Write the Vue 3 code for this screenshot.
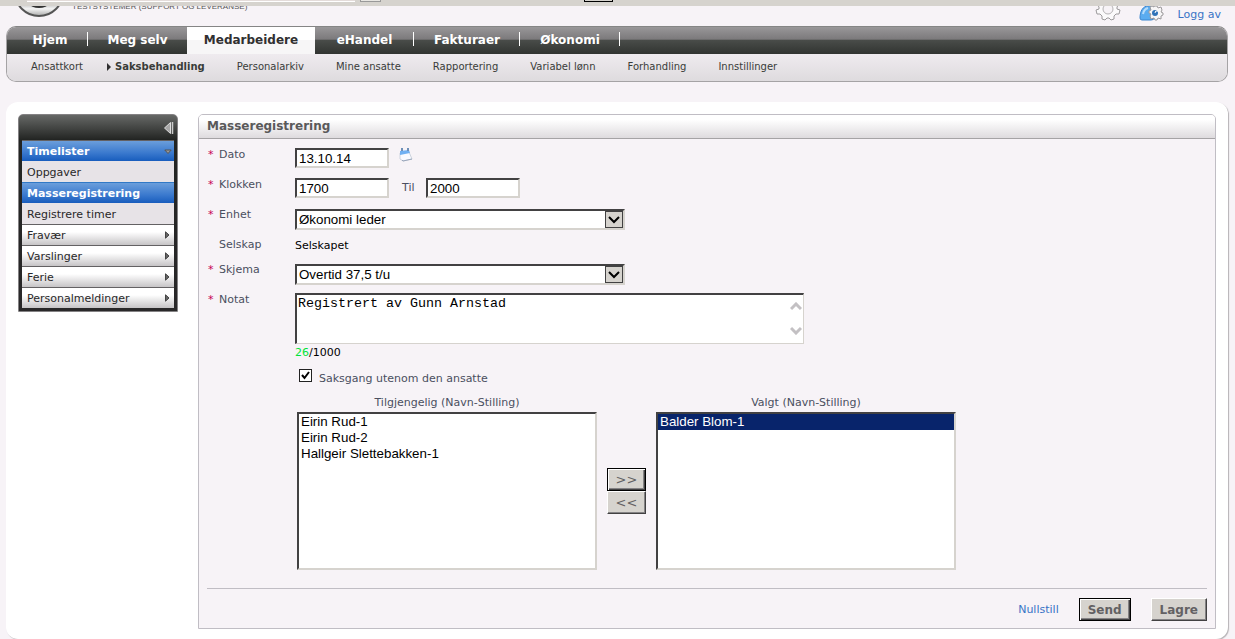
<script setup>
import { ref } from 'vue'

const tabs = ['Hjem', 'Meg selv', 'Medarbeidere', 'eHandel', 'Fakturaer', 'Økonomi']
const subTabs = [
  'Ansattkort', 'Saksbehandling', 'Personalarkiv', 'Mine ansatte',
  'Rapportering', 'Variabel lønn', 'Forhandling', 'Innstillinger',
]
const menu = [
  { label: 'Timelister', kind: 'open' },
  { label: 'Oppgaver', kind: 'child' },
  { label: 'Masseregistrering', kind: 'current' },
  { label: 'Registrere timer', kind: 'child' },
  { label: 'Fravær', kind: 'closed' },
  { label: 'Varslinger', kind: 'closed' },
  { label: 'Ferie', kind: 'closed' },
  { label: 'Personalmeldinger', kind: 'closed' },
]
const date = ref('13.10.14')
const from = ref('1700')
const to = ref('2000')
const note = ref('Registrert av Gunn Arnstad')
const bypass = ref(true)
const available = ['Eirin Rud-1', 'Eirin Rud-2', 'Hallgeir Slettebakken-1']
const chosen = ['Balder Blom-1']
const picked = ref(['Balder Blom-1'])
</script>

<template>
  <div class="page">
    <div class="strip">
      <span class="strip-field"></span>
      <span class="strip-chip"></span>
      <span class="strip-box"></span>
    </div>

    <header class="top">
      <div class="brand">
        <svg class="logo" width="50" height="50" viewBox="0 0 50 50" aria-hidden="true">
          <defs>
            <linearGradient id="ring" x1="0" y1="0" x2="0" y2="1">
              <stop offset="0.6" stop-color="#777" />
              <stop offset="0.85" stop-color="#f4f4f4" />
              <stop offset="1" stop-color="#aaa" />
            </linearGradient>
          </defs>
          <circle cx="25" cy="25" r="24" fill="url(#ring)" stroke="#555" stroke-width="2" />
          <circle cx="25" cy="24" r="17" fill="#333" />
        </svg>
        <span class="brand-text">TESTSYSTEMER (SUPPORT OG LEVERANSE)</span>
      </div>
      <div class="tools">
        <svg class="gear" width="26" height="26" viewBox="0 0 26 26" aria-hidden="true">
          <path
            d="M11 2l4 0 1 3 3 1 3-1 2 3-2 3 0 2 3 1-1 4-3 0-2 2 0 3-3 1-2-2-2 0-2 2-3-1 0-3-2-2-3 0-1-4 3-1 0-2-2-3 2-3 3 1 3-1z"
            fill="#fbfafb" stroke="#9c9a9c" stroke-linejoin="round"
          />
          <circle cx="13" cy="13" r="5" fill="#f7f3f7" stroke="#b5b3b5" />
        </svg>
        <svg class="user" width="25" height="26" viewBox="0 0 25 26" aria-hidden="true">
          <path d="M1 23c0-7 3-12 8-12s6 4 6 12q0 2-3 2H3q-2 0-2-2z" fill="#5aacf0" stroke="#3a86d0" />
          <path d="M4 19q1-5 5-6" stroke="#b5dcfb" stroke-width="2" fill="none" />
          <path
            d="M15 11h3l1 2 3-1 1 3-1 2 2 1 0 2-2 1 0 3-3-1-1 2-2 0-1-2-3 1-1-3 1-2-2-1 0-2 2-1-1-3 2-1 2 1z"
            fill="#f7f6f7" stroke="#9c9a9c" stroke-linejoin="round"
          />
          <circle cx="16" cy="18" r="3" fill="#2f72b8" />
          <path d="M16 18q0-3 3-2" stroke="#fff" fill="none" />
        </svg>
        <a href="#" class="link">Logg av</a>
      </div>
    </header>

    <nav class="nav" aria-label="Hovedmeny">
      <div class="tabs">
        <a v-for="t in tabs" :key="t" href="#" class="tab" :class="{ active: t === 'Medarbeidere', plain: t === 'Meg selv' }">{{ t }}</a>
      </div>
      <div class="subtabs">
        <a v-for="t in subTabs" :key="t" href="#" class="subtab" :class="{ active: t === 'Saksbehandling' }">{{ t }}</a>
      </div>
    </nav>

    <main class="content">
      <aside class="side">
        <div class="side-head">
          <button type="button" class="collapse" aria-label="Skjul meny">
            <svg width="10" height="12" viewBox="0 0 10 12" aria-hidden="true">
              <path d="M6.500.5v11L.5 6z" fill="#a8a8a8" stroke="#ddd" />
              <path d="M8.500 0v12" stroke="#ccc" stroke-width="1.500" />
            </svg>
          </button>
        </div>
        <a v-for="m in menu" :key="m.label" href="#" class="item" :class="m.kind">
          <span>{{ m.label }}</span>
          <svg v-if="m.kind === 'closed'" class="mark" width="7" height="8" viewBox="0 0 7 8" aria-hidden="true">
            <path d="M1.500.8L5 4 1.500 7.200z" fill="#666" stroke="#444" />
          </svg>
          <svg v-if="m.kind === 'open'" width="8" height="6" viewBox="0 0 8 6" aria-hidden="true">
            <path d="M.8 1h6.400L4 4.500z" fill="#999" stroke="#555" />
          </svg>
        </a>
      </aside>

      <form class="panel" @submit.prevent>
        <h1 class="title">Masseregistrering</h1>
        <div class="body">
          <div class="row">
            <label for="date" class="lab req">Dato</label>
            <div class="ctl">
              <input id="date" v-model="date" class="field" type="text" />
              <button type="button" class="cal" aria-label="Kalender">
                <svg width="14" height="15" viewBox="0 0 14 15" aria-hidden="true">
                  <path d="M1 5l9-1 3 7-9 2-3-2z" fill="#f8faff" stroke="#cdd3de" />
                  <path d="M1 3l9-1 1 3-10 2z" fill="#6fb0f2" />
                  <path d="M3 0v3M9 0v3" stroke="#6d8fb8" stroke-width="2" />
                  <path d="M3 12l1 1 9-2" stroke="#9aa6bb" fill="none" />
                </svg>
              </button>
            </div>
          </div>
          <div class="row">
            <label for="from" class="lab req">Klokken</label>
            <div class="ctl">
              <input id="from" v-model="from" class="field" type="text" />
              <label for="to" class="til">Til</label>
              <input id="to" v-model="to" class="field" type="text" />
            </div>
          </div>
          <div class="row">
            <label for="unit" class="lab req">Enhet</label>
            <div class="ctl drop">
              <select id="unit" class="combo"><option>Økonomi leder</option></select>
              <span class="arrow"><svg width="12" height="8" viewBox="0 0 12 8" aria-hidden="true"><path d="M1 1l5 5 5-5" fill="none" stroke="#000" stroke-width="2" /></svg></span>
            </div>
          </div>
          <div class="row short">
            <span class="lab">Selskap</span>
            <div class="ctl value">Selskapet</div>
          </div>
          <div class="row">
            <label for="schema" class="lab req">Skjema</label>
            <div class="ctl drop">
              <select id="schema" class="combo"><option>Overtid 37,5 t/u</option></select>
              <span class="arrow"><svg width="12" height="8" viewBox="0 0 12 8" aria-hidden="true"><path d="M1 1l5 5 5-5" fill="none" stroke="#000" stroke-width="2" /></svg></span>
            </div>
          </div>
          <div class="row">
            <label for="note" class="lab req">Notat</label>
            <div class="note">
              <div class="area">
                <textarea id="note" v-model="note" rows="3"></textarea>
                <span class="scroll">
                  <svg width="12" height="9" viewBox="0 0 12 9" aria-hidden="true"><path d="M1 7l5-5 5 5" fill="none" stroke="#c3c0c3" stroke-width="3" /></svg>
                  <svg width="12" height="9" viewBox="0 0 12 9" aria-hidden="true"><path d="M1 2l5 5 5-5" fill="none" stroke="#c3c0c3" stroke-width="3" /></svg>
                </span>
              </div>
              <div class="count"><span class="used">{{ note.length }}</span>/1000</div>
              <label class="check">
                <input v-model="bypass" type="checkbox" />
                <span>Saksgang utenom den ansatte</span>
              </label>
            </div>
          </div>

          <div class="lists">
            <div class="list">
              <label for="avail">Tilgjengelig (Navn-Stilling)</label>
              <select id="avail" multiple size="9">
                <option v-for="p in available" :key="p">{{ p }}</option>
              </select>
            </div>
            <div class="movers">
              <button type="button" class="btn default">&gt;&gt;</button>
              <button type="button" class="btn">&lt;&lt;</button>
            </div>
            <div class="list">
              <label for="chosen">Valgt (Navn-Stilling)</label>
              <select id="chosen" v-model="picked" multiple size="9">
                <option v-for="p in chosen" :key="p">{{ p }}</option>
              </select>
            </div>
          </div>

          <div class="actions">
            <a href="#" class="link">Nullstill</a>
            <button type="submit" class="btn big default">Send</button>
            <button type="button" class="btn big">Lagre</button>
          </div>
        </div>
      </form>
    </main>
  </div>
</template>

<style>
body {
  background: #f7f3f7;
}
</style>

<style scoped>
.page {
  font-family: Verdana, "DejaVu Sans", sans-serif;
  font-size: 11px;
  line-height: 14px;
  color: #4a4f60;
}
.page *,
.page *::before,
.page *::after {
  box-sizing: border-box;
}
a {
  text-decoration: none;
}
.link {
  color: #3973c6;
}
.strip {
  display: flex;
  height: 6px;
  padding-left: 27px;
  background: #d6d3ce;
}
.strip-field {
  width: 328px;
  height: 2px;
  background: #e4dcda;
  border-bottom: 1px solid #fff;
}
.strip-chip {
  width: 21px;
  height: 2px;
  margin-left: 5px;
  background: #e8e6e2;
  border: 1px solid #999;
  border-top: 0;
}
.strip-box {
  width: 29px;
  height: 2px;
  margin-left: 203px;
  border: 1px solid #000;
  border-top: 0;
}
.top {
  display: flex;
  justify-content: space-between;
  align-items: flex-end;
  height: 20px;
  overflow: hidden;
  padding: 0 14px;
}
.brand {
  display: flex;
  align-items: flex-end;
  gap: 8px;
  padding-bottom: 9px;
}
.brand-text {
  font-family: "Liberation Sans", Arial, sans-serif;
  font-size: 8px;
  line-height: 12px;
  padding-bottom: 4px;
  color: #555;
}
.tools {
  display: flex;
  align-items: flex-end;
}
.tools .link {
  padding-bottom: 4px;
}
.gear {
  margin: 0 18px 4px 0;
}
.user {
  margin: 0 14px 5px 0;
}
.nav {
  margin: 0 7px 0 6px;
  border: 1px solid #a5a3a5;
  border-top-color: #858585;
  border-radius: 10px;
  overflow: hidden;
}
.tabs {
  display: grid;
  grid-template-columns: 76px 99px 128px 99px 106px 100px;
  height: 27px;
  padding-left: 5px;
  background: linear-gradient(#999799, #7b797b 46%, #4a4d4a 47%, #313431);
}
.tab {
  position: relative;
  display: flex;
  align-items: center;
  justify-content: center;
  padding-bottom: 2px;
  font-size: 12px;
  font-weight: bold;
  color: #fff;
}
.tab::after {
  content: "";
  position: absolute;
  right: 0;
  top: 5px;
  width: 1px;
  height: 14px;
  background: #fff;
}
.tab.plain::after,
.tab.active::after {
  display: none;
}
.tab.active {
  color: #313031;
  background: linear-gradient(#fff, #fff 50%, #f7f6f7 50%);
}
.subtabs {
  display: flex;
  height: 27px;
  padding: 6px 8px 0;
  background: linear-gradient(#efebef, #dedbde);
}
.subtab {
  position: relative;
  padding: 0 16px;
  font-size: 10px;
  color: #393c39;
}
.subtab.active {
  font-weight: bold;
}
.subtab.active::before {
  content: "";
  position: absolute;
  left: 8px;
  top: 3px;
  border: 4px solid transparent;
  border-left-color: #313031;
  border-right: 0;
}
.content {
  display: flex;
  align-items: flex-start;
  gap: 20px;
  margin: 20px 7px 0 6px;
  padding: 12px 12px 10px;
  background: #fff;
  border-radius: 12px;
  box-shadow: 1px 1px 1px #b5b2b5;
}
.side {
  flex: none;
  width: 160px;
  padding: 0 3px 3px;
  border: 1px solid #848284;
  border-radius: 5px 5px 0 0;
  background: linear-gradient(#666866, #222422 25px, #292829);
}
.side-head {
  display: flex;
  justify-content: flex-end;
  align-items: center;
  height: 25px;
}
.collapse {
  display: flex;
  padding: 0;
  border: 0;
  background: none;
}
.item {
  display: flex;
  align-items: center;
  justify-content: space-between;
  height: 21px;
  padding: 1px 2px 0 5px;
  border-top: 1px solid #636163;
  color: #292829;
  background: linear-gradient(#fff 35%, #c6c4c6);
}
.mark {
  margin: 0 1px 1px 0;
}
.item.child {
  background: #e7e3e7;
  border-top-color: #e7e3e7;
}
.item.open,
.item.current {
  font-weight: bold;
  color: #fff;
  background: linear-gradient(#6b9edb, #3a79ce 60%, #185dbd);
}
.item.current {
  border-top-color: #3179c6;
}
.panel {
  flex: 1;
  min-width: 0;
  background: #f7f3f7;
  border: 1px solid #c0bdc4;
  border-radius: 5px 5px 0 0;
}
.title {
  margin: 0;
  height: 24px;
  padding: 0 8px;
  font-size: 12px;
  line-height: 22px;
  color: #5a595a;
  border-bottom: 1px solid #a5a3a5;
  border-radius: 4px 4px 0 0;
  background: linear-gradient(#fff 20%, #dedbde);
}
.body {
  padding: 8px 8px 7px;
}
.row {
  display: flex;
  min-height: 30px;
}
.row.short {
  min-height: 25px;
}
.lab {
  position: relative;
  flex: none;
  width: 88px;
  padding: 1px 0 0 12px;
}
.req::before {
  content: "*";
  position: absolute;
  left: 1px;
  color: #c60052;
}
.ctl {
  display: flex;
  align-items: flex-start;
  padding-top: 1px;
}
.ctl.value {
  padding-top: 2px;
}
.value,
.count {
  color: #000;
}
input,
select,
textarea {
  margin: 0;
  color: #000;
  background: #fff;
  border: 2px solid #424142;
  border-right-color: #d6d3ce;
  border-bottom-color: #d6d3ce;
  border-radius: 0;
  outline: 0;
}
input,
select {
  font-family: "Liberation Sans", Arial, sans-serif;
}
.field {
  width: 94px;
  height: 20px;
  padding: 0 2px;
}
.cal {
  display: flex;
  margin-left: 10px;
  padding: 0;
  border: 0;
  background: none;
}
.til {
  width: 37px;
  padding: 3px 0 0 13px;
}
.drop {
  position: relative;
  align-self: flex-start;
  padding-top: 2px;
}
.combo {
  width: 330px;
  height: 21px;
  padding: 0 20px 0 2px;
  appearance: none;
}
.arrow {
  position: absolute;
  right: 2px;
  bottom: 2px;
  display: flex;
  align-items: center;
  justify-content: center;
  width: 18px;
  height: 17px;
  background: #d6d3ce;
  border: 1px solid #424142;
  pointer-events: none;
}
.area {
  position: relative;
  margin-top: 1px;
  width: 509px;
}
textarea {
  display: block;
  width: 100%;
  height: 51px;
  padding: 1px 20px 0 1px;
  border-right-width: 1px;
  border-bottom-width: 1px;
  font-family: "Liberation Mono", "Courier New", monospace;
  resize: none;
  overflow: hidden;
}
.scroll {
  position: absolute;
  right: 2px;
  top: 9px;
  bottom: 9px;
  display: flex;
  flex-direction: column;
  justify-content: space-between;
  pointer-events: none;
}
.count {
  margin-top: 2px;
}
.used {
  color: #00e339;
}
.check {
  display: flex;
  align-items: flex-start;
  gap: 7px;
  margin-top: 9px;
  padding-left: 4px;
}
.check input {
  appearance: none;
  width: 13px;
  height: 13px;
  border: 1px solid #222;
}
.check input:checked {
  background: #fff url("data:image/svg+xml,%3Csvg xmlns='http://www.w3.org/2000/svg' viewBox='0 0 11 11'%3E%3Cpath d='M2 5l2.500 3L9 2' fill='none' stroke='%23000' stroke-width='2'/%3E%3C/svg%3E") center / 11px 11px no-repeat;
}
.check span {
  padding-top: 3px;
}
.lists {
  display: flex;
  gap: 10px;
  margin-top: 10px;
  padding-left: 90px;
}
.list {
  display: flex;
  flex-direction: column;
  width: 300px;
  text-align: center;
}
.list label {
  height: 16px;
}
.list select {
  height: 158px;
  padding: 0;
  overflow: hidden;
}
.list option {
  height: 16px;
  padding: 0 2px;
  line-height: 16px;
  text-align: left;
}
.list option:checked {
  color: #fff;
  background: #08246b linear-gradient(#08246b, #08246b);
}
.movers {
  display: flex;
  flex-direction: column;
  width: 39px;
  padding-top: 72px;
}
.btn {
  height: 23px;
  padding: 0;
  font-family: inherit;
  font-size: 13px;
  font-weight: normal;
  line-height: 18px;
  color: #636163;
  background: #d6d3ce;
  border: 1px solid #fff;
  border-right-color: #424142;
  border-bottom-color: #424142;
  box-shadow: inset -1px -1px #848284;
}
.btn.default {
  border-color: #000;
  box-shadow: inset 1px 1px #fff, inset -1px -1px #424142, inset -2px -2px #848284;
}
.btn.big {
  padding: 0 8px;
  font-size: 12px;
  font-weight: bold;
}
.actions {
  display: flex;
  justify-content: flex-end;
  align-items: center;
  gap: 20px;
  margin-top: 18px;
  padding-top: 9px;
  border-top: 1px solid #c0bdc4;
}
</style>
